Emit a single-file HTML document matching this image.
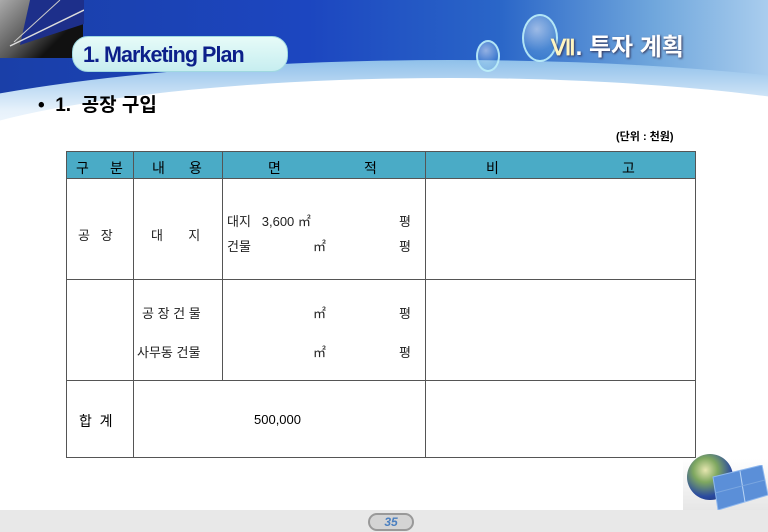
<!DOCTYPE html>
<html><head><meta charset="utf-8"><style>
*{margin:0;padding:0;box-sizing:border-box}
body{width:768px;height:532px;overflow:hidden;position:relative;background:#fff;font-family:"Liberation Sans","Noto Sans CJK KR",sans-serif}
.hdr{position:absolute;left:0;top:0;width:768px;height:120px;
background:linear-gradient(90deg,#1a3fa8 0%,#1c46c0 40%,#2a66c8 65%,#6fa6dc 85%,#a9cdee 100%)}
.wave{position:absolute;left:-200px;top:60px;width:1300px;height:200px;border-radius:50% 50% 0 0/60% 60% 0 0;
background:linear-gradient(180deg,#8fc0ea 0%,#e6f1fb 25%,#fff 45%)}
.wave2{position:absolute;left:-100px;top:78px;width:1100px;height:200px;border-radius:50%;background:#fff}
.corner{position:absolute;left:0;top:0;width:83px;height:58px;background:linear-gradient(135deg,#aaa 0%,#555 45%,#111 70%)}
.pill{position:absolute;left:72px;top:36px;width:216px;height:36px;border-radius:16px;
background:linear-gradient(180deg,#e6fbf8,#c7eef0);border:1px solid #9fd8e0}
.pill span{position:absolute;left:10px;top:5px;font-family:"Liberation Sans Narrow","Liberation Sans",sans-serif;font-weight:bold;font-size:22px;color:#0c1f8a;letter-spacing:-1px;transform:scaleX(.98);transform-origin:left}
.bub{position:absolute;border-radius:50%;border:2px solid rgba(190,240,250,.9);background:radial-gradient(circle at 40% 30%,rgba(255,255,255,.5),rgba(120,190,230,.2) 60%,rgba(40,120,200,.3))}
.title{position:absolute;left:551px;top:27px;color:#fff;font-weight:bold;font-size:24px;text-shadow:1px 1px 2px #335}
.bul{position:absolute;left:38px;top:90px;font-size:19px;font-weight:bold;color:#000}
.unit{position:absolute;left:616px;top:128px;font-size:11px;font-weight:bold}
.t{position:absolute;font-size:13px;color:#222;white-space:nowrap}
.ln{position:absolute;background:#555}
.foot{position:absolute;left:0;top:510px;width:768px;height:22px;background:#e8e8e8}
.pn{position:absolute;left:368px;top:513px;width:46px;height:18px;border-radius:9px;background:#d4d4d4;border:2px solid #999;text-align:center;font-size:12px;font-style:italic;font-weight:bold;color:#4a7fc0;line-height:14px}
</style></head><body>
<div class="hdr"></div>
<div class="wave"></div>
<div class="wave2"></div>
<div class="corner"></div>
<svg style="position:absolute;left:0;top:0" width="84" height="60"><polygon points="30,0 84,0 84,24 20,45" fill="#1d2f8a"/><line x1="10" y1="46" x2="84" y2="10" stroke="#ddd" stroke-width="1.5"/><line x1="14" y1="42" x2="60" y2="0" stroke="#ccc" stroke-width="1"/></svg>
<div class="pill"><span>1. Marketing Plan</span></div>
<div class="bub" style="left:522px;top:14px;width:36px;height:48px"></div>
<div class="bub" style="left:476px;top:40px;width:24px;height:32px"></div>
<div class="title"><span style="font-family:'Liberation Serif',serif;font-size:22px;color:#fff5c0">Ⅶ</span>. 투자 계획</div>
<div class="bul">•&nbsp;&nbsp;1.&nbsp; 공장 구입</div>
<div class="unit">(단위 : 천원)</div>

<div style="position:absolute;left:66px;top:151px;width:630px;height:27px;background:#4aabc6"></div>
<div class="ln" style="left:66px;top:151px;width:630px;height:1px"></div>
<div class="ln" style="left:66px;top:178px;width:630px;height:1px"></div>
<div class="ln" style="left:66px;top:279px;width:630px;height:1px"></div>
<div class="ln" style="left:66px;top:380px;width:630px;height:1px"></div>
<div class="ln" style="left:66px;top:457px;width:630px;height:1px"></div>
<div class="ln" style="left:66px;top:151px;width:1px;height:307px"></div>
<div class="ln" style="left:133px;top:151px;width:1px;height:307px"></div>
<div class="ln" style="left:222px;top:151px;width:1px;height:229px"></div>
<div class="ln" style="left:425px;top:151px;width:1px;height:307px"></div>
<div class="ln" style="left:695px;top:151px;width:1px;height:307px"></div>

<div class="t" style="left:76px;top:158px;font-size:14px;color:#000">구</div>
<div class="t" style="left:110px;top:158px;font-size:14px;color:#000">분</div>
<div class="t" style="left:152px;top:158px;font-size:14px;color:#000">내</div>
<div class="t" style="left:189px;top:158px;font-size:14px;color:#000">용</div>
<div class="t" style="left:268px;top:158px;font-size:14px;color:#000">면</div>
<div class="t" style="left:364px;top:158px;font-size:14px;color:#000">적</div>
<div class="t" style="left:486px;top:158px;font-size:14px;color:#000">비</div>
<div class="t" style="left:622px;top:158px;font-size:14px;color:#000">고</div>

<div class="t" style="left:78px;top:225px">공&nbsp;&nbsp;&nbsp;장</div>
<div class="t" style="left:151px;top:225px">대&nbsp;&nbsp;&nbsp;&nbsp;&nbsp;&nbsp;&nbsp;지</div>
<div class="t" style="left:227px;top:211px">대지&nbsp;&nbsp;&nbsp;3,600&nbsp;㎡</div>
<div class="t" style="left:399px;top:211px">평</div>
<div class="t" style="left:227px;top:236px">건물</div>
<div class="t" style="left:313px;top:236px">㎡</div>
<div class="t" style="left:399px;top:236px">평</div>

<div class="t" style="left:142px;top:303px">공 장 건 물</div>
<div class="t" style="left:313px;top:303px">㎡</div>
<div class="t" style="left:399px;top:303px">평</div>
<div class="t" style="left:137px;top:342px">사무동 건물</div>
<div class="t" style="left:313px;top:342px">㎡</div>
<div class="t" style="left:399px;top:342px">평</div>

<div class="t" style="left:79px;top:411px;font-size:14px;color:#000">합&nbsp;&nbsp;계</div>
<div class="t" style="left:254px;top:412px;color:#000">500,000</div>

<div class="foot"></div>
<div style="position:absolute;left:683px;top:459px;width:85px;height:51px;background:linear-gradient(180deg,#fff,#e6e6e6)"></div>
<div style="position:absolute;left:687px;top:454px;width:46px;height:46px;border-radius:50%;background:radial-gradient(circle at 40% 35%,#e6e6b0 0%,#7fa860 30%,#2a4aa0 65%,#1a2660 100%)"></div>
<svg style="position:absolute;left:710px;top:465px" width="58" height="45"><polygon points="3,12 52,0 58,30 8,45" fill="#5b8fd8" stroke="#8fb8ee"/><line x1="30" y1="6" x2="35" y2="37" stroke="#b8d4f4"/><line x1="5" y1="28" x2="55" y2="15" stroke="#7aa6e0"/></svg>
<div class="pn">35</div>
</body></html>
